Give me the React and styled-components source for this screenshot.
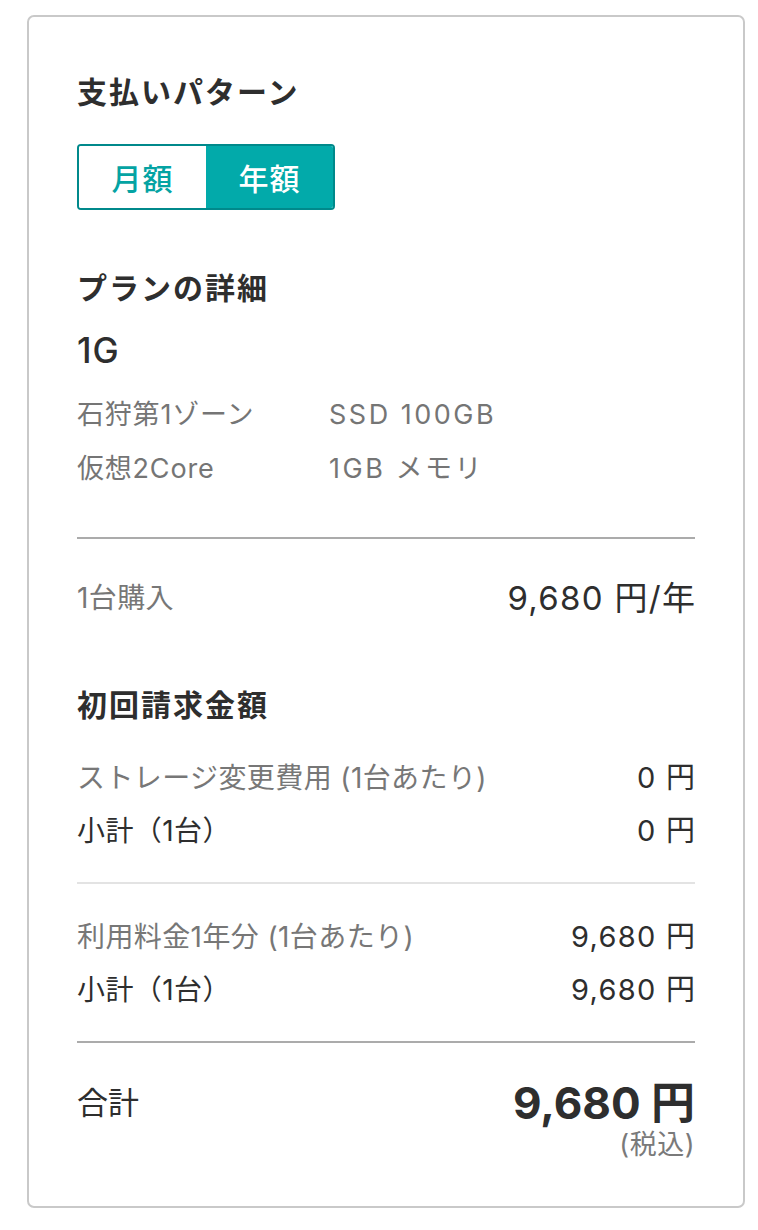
import React from "react";
import styled, { createGlobalStyle } from "styled-components";

const GlobalStyle = createGlobalStyle`
  body {
    margin: 0;
    background: #ffffff;
    font-family: Inter, "Noto Sans CJK JP", sans-serif;
    color: #2e2e2e;
  }
`;

const Card = styled.div`
  box-sizing: border-box;
  width: 718px;
  margin: 15px 0 0 27px;
  padding: 55px 48px 46px;
  border: 2px solid #c9c9c9;
  border-radius: 7px;
  display: flex;
  flex-direction: column;
`;

const SectionTitle = styled.h2`
  margin: ${(p) => p.$top || 0}px 0 0;
  font-size: 30px;
  line-height: 40px;
  font-weight: 700;
  letter-spacing: 2px;
  color: #2e2e2e;
`;

const Toggle = styled.div`
  display: flex;
  width: 258px;
  height: 66px;
  box-sizing: border-box;
  margin-top: 32px;
  border: 2px solid #00898b;
  border-radius: 4px;
  overflow: hidden;
`;

const ToggleButton = styled.button`
  flex: 1;
  border: 0;
  margin: 0;
  padding: 0;
  font-family: inherit;
  font-size: 30px;
  font-weight: 500;
  letter-spacing: 1px;
  background: ${(p) => (p.$active ? "#02aaaa" : "#ffffff")};
  color: ${(p) => (p.$active ? "#ffffff" : "#04a3a3")};
`;

const PlanName = styled.div`
  margin-top: 22px;
  font-size: 35px;
  line-height: 40px;
  font-weight: 500;
  letter-spacing: 1px;
`;

const SpecGrid = styled.div`
  display: grid;
  grid-template-columns: 252px 1fr;
  row-gap: 14px;
  margin-top: 25px;
  font-size: 27px;
  line-height: 40px;
  color: #757575;
`;

const SpecCell = styled.span`
  letter-spacing: ${(p) => (p.$latin ? 2.5 : 0.8)}px;
`;

const Divider = styled.hr`
  margin: ${(p) => p.$top}px 0 0;
  border: 0;
  height: 2px;
  background: ${(p) => (p.$light ? "#e3e3e3" : "#ababab")};
`;

const Row = styled.div`
  display: flex;
  justify-content: space-between;
  align-items: center;
  margin-top: ${(p) => p.$top}px;
  line-height: 40px;
`;

const Label = styled.span`
  font-size: 28px;
  letter-spacing: 0.4px;
  color: ${(p) => (p.$muted ? "#777777" : "#2e2e2e")};
`;

const Value = styled.span`
  font-size: ${(p) => p.$size || 29}px;
  letter-spacing: 1.3px;
  margin-right: -1.3px;
  color: #2e2e2e;
`;

const TotalRow = styled.div`
  display: flex;
  justify-content: space-between;
  align-items: flex-start;
  margin-top: 35px;
`;

const TotalLabel = styled.span`
  font-size: 31px;
  line-height: 50px;
`;

const TotalAmount = styled.div`
  display: flex;
  flex-direction: column;
  align-items: flex-end;
`;

const Amount = styled.span`
  font-size: 44px;
  line-height: 50px;
  font-weight: 700;
`;

const TaxNote = styled.span`
  margin-top: 2px;
  font-size: 27px;
  line-height: 30px;
  letter-spacing: 0.5px;
  color: #7a7a7a;
`;

export default function App() {
  return (
    <>
      <GlobalStyle />
      <Card>
        <SectionTitle>支払いパターン</SectionTitle>
        <Toggle>
          <ToggleButton>月額</ToggleButton>
          <ToggleButton $active>年額</ToggleButton>
        </Toggle>

        <SectionTitle $top={58}>プランの詳細</SectionTitle>
        <PlanName>1G</PlanName>
        <SpecGrid>
          <SpecCell>石狩第1ゾーン</SpecCell>
          <SpecCell $latin>SSD 100GB</SpecCell>
          <SpecCell>仮想2Core</SpecCell>
          <SpecCell $latin>1GB メモリ</SpecCell>
        </SpecGrid>

        <Divider $top={48} />
        <Row $top={39}>
          <Label $muted>1台購入</Label>
          <Value $size={33}>9,680 円/年</Value>
        </Row>

        <SectionTitle $top={67}>初回請求金額</SectionTitle>
        <Row $top={33}>
          <Label $muted>ストレージ変更費用 (1台あたり)</Label>
          <Value>0 円</Value>
        </Row>
        <Row $top={13}>
          <Label>小計（1台）</Label>
          <Value>0 円</Value>
        </Row>

        <Divider $light $top={31} />
        <Row $top={33}>
          <Label $muted>利用料金1年分 (1台あたり)</Label>
          <Value>9,680 円</Value>
        </Row>
        <Row $top={13}>
          <Label>小計（1台）</Label>
          <Value>9,680 円</Value>
        </Row>

        <Divider $top={31} />
        <TotalRow>
          <TotalLabel>合計</TotalLabel>
          <TotalAmount>
            <Amount>9,680 円</Amount>
            <TaxNote>(税込)</TaxNote>
          </TotalAmount>
        </TotalRow>
      </Card>
    </>
  );
}
